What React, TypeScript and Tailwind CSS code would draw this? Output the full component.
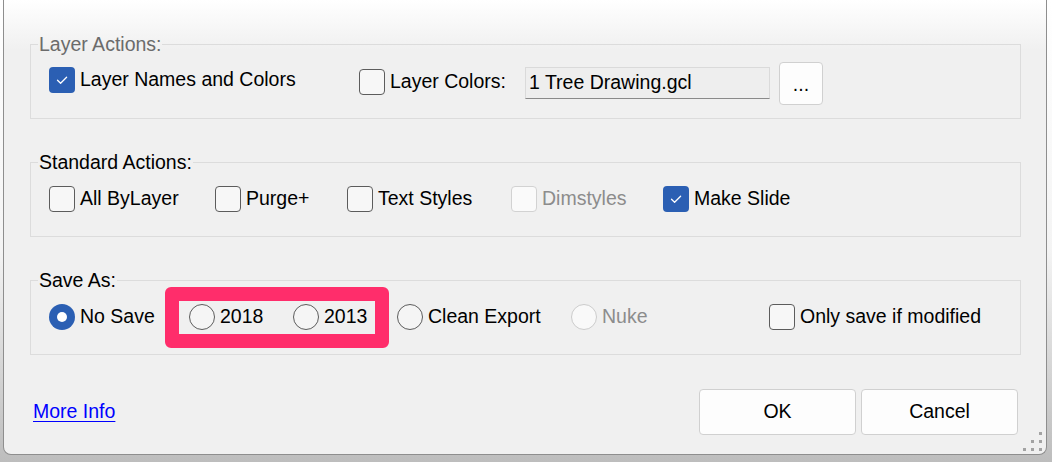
import React from 'react';

const font = { fontFamily: '"Liberation Sans", Arial, sans-serif' };

function CheckBox({ checked, disabled }: { checked?: boolean; disabled?: boolean }) {
  if (checked) {
    return (
      <span className="flex h-[26px] w-[26px] shrink-0 items-center justify-center rounded-[4px] bg-[#2b5fb3]">
        <svg width="26" height="26" viewBox="0 0 26 26" fill="none">
          <path d="M8.5 13.2 L11.6 16.3 L17.6 10.3" stroke="#ffffff" strokeWidth="1.3" strokeLinecap="round" strokeLinejoin="round" />
        </svg>
      </span>
    );
  }
  return (
    <span
      className={
        disabled
          ? 'h-[26px] w-[26px] shrink-0 rounded-[4px] border border-[#d2d2d2] bg-[#fafafa]'
          : 'h-[26px] w-[26px] shrink-0 rounded-[4px] border border-[#5c5c5c] bg-[#f7f7f7]'
      }
    />
  );
}

function Radio({ checked, disabled }: { checked?: boolean; disabled?: boolean }) {
  if (checked) {
    return (
      <span className="flex h-[26px] w-[26px] shrink-0 items-center justify-center rounded-full bg-[#2b5fb3]">
        <span className="h-[10px] w-[10px] rounded-full bg-white" />
      </span>
    );
  }
  return (
    <span
      className={
        disabled
          ? 'h-[26px] w-[26px] shrink-0 rounded-full border border-[#cccccc] bg-[#f9f9f9]'
          : 'h-[26px] w-[26px] shrink-0 rounded-full border border-[#5c5c5c] bg-[#f5f5f5]'
      }
    />
  );
}

function Option({
  label,
  width,
  kind = 'check',
  checked,
  disabled,
}: {
  label: string;
  width?: string;
  kind?: 'check' | 'radio';
  checked?: boolean;
  disabled?: boolean;
}) {
  return (
    <div className={`flex shrink-0 items-center gap-[5px] ${width ?? ''}`}>
      {kind === 'check' ? <CheckBox checked={checked} disabled={disabled} /> : <Radio checked={checked} disabled={disabled} />}
      <span className={disabled ? 'text-[#8c8c8c]' : 'text-black'}>{label}</span>
    </div>
  );
}

function Group({
  title,
  muted,
  rowClass,
  children,
}: {
  title: string;
  muted?: boolean;
  rowClass?: string;
  children: React.ReactNode;
}) {
  return (
    <fieldset className="w-[991px] border border-[#dcdcdc] pb-[13px]">
      <legend className={`ml-[7px] px-[1px] leading-[22px] ${muted ? 'text-[#6b6b6b]' : 'text-black'}`}>{title}</legend>
      <div className={`flex h-[50px] items-center pl-[18px] ${rowClass ?? ''}`}>{children}</div>
    </fieldset>
  );
}

export default function App() {
  return (
    <div
      className="h-[462px] w-[1052px] overflow-hidden bg-[linear-gradient(to_bottom,#ffffff,#f4f4f4_250px,#bdbdbd)] text-[19.5px]"
      style={font}
    >
      <div className="relative ml-[3px] flex h-[455px] w-[1044px] flex-col rounded-b-[8px] border-x border-b border-[#8e8e8e] bg-[linear-gradient(to_bottom,#ffffff_0px,#f0f0f0_50px)] pl-[26px] pr-[28px] pt-[33px]">
        {/* Layer Actions */}
        <Group title="Layer Actions:" muted>
          <Option label="Layer Names and Colors" checked width="w-[310px]" />
          <Option label="Layer Colors:" width="w-[166px] mt-[3px]" />
          <div className="mt-[6px] flex h-[32px] w-[245px] items-center border border-[#dadada] border-b-[#8a8a8a] bg-[#eeeeee] pl-[3px]">
            1 Tree Drawing.gcl
          </div>
          <button className="ml-[9px] mt-[7px] flex h-[43px] w-[44px] items-end justify-center rounded-[4px] border border-[#d0d0d0] bg-[#fdfdfd] pb-[10px] leading-none">
            ...
          </button>
        </Group>

        {/* Standard Actions */}
        <div className="mt-[32px]">
          <Group title="Standard Actions:" rowClass="pt-[2px]">
            <Option label="All ByLayer" width="w-[166px]" />
            <Option label="Purge+" width="w-[132px]" />
            <Option label="Text Styles" width="w-[164px]" />
            <Option label="Dimstyles" disabled width="w-[152px]" />
            <Option label="Make Slide" checked />
          </Group>
        </div>

        {/* Save As */}
        <div className="mt-[32px]">
          <Group title="Save As:" rowClass="pt-[2px]">
            <Option label="No Save" kind="radio" checked width="w-[116px]" />
            <div className="flex h-[61px] w-[224px] shrink-0 items-center rounded-[6px] border-[14px] border-[#ff2d6b] px-[10px]">
              <Option label="2018" kind="radio" width="w-[104px]" />
              <Option label="2013" kind="radio" />
            </div>
            <Option label="Clean Export" kind="radio" width="w-[174px] ml-[8px]" />
            <Option label="Nuke" kind="radio" disabled width="w-[198px]" />
            <Option label="Only save if modified" />
          </Group>
        </div>

        {/* Footer */}
        <div className="mt-[34px] flex h-[46px] items-center">
          <a href="#" className="ml-[3px] text-[#0000ff] underline underline-offset-[3px]">
            More Info
          </a>
          <div className="ml-auto flex gap-[5px]">
            <button className="h-[46px] w-[157px] rounded-[4px] border border-[#d0d0d0] bg-[#fdfdfd] text-black">OK</button>
            <button className="h-[46px] w-[157px] rounded-[4px] border border-[#d0d0d0] bg-[#fdfdfd] text-black">Cancel</button>
          </div>
        </div>

        {/* resize grip */}
        <div className="absolute bottom-[3px] right-[4px] grid grid-cols-3 gap-[5px]">
          <span className="h-[3px] w-[3px]" />
          <span className="h-[3px] w-[3px]" />
          <span className="h-[3px] w-[3px] bg-[#a3a3a3]" />
          <span className="h-[3px] w-[3px]" />
          <span className="h-[3px] w-[3px] bg-[#a3a3a3]" />
          <span className="h-[3px] w-[3px] bg-[#a3a3a3]" />
          <span className="h-[3px] w-[3px] bg-[#a3a3a3]" />
          <span className="h-[3px] w-[3px] bg-[#a3a3a3]" />
          <span className="h-[3px] w-[3px] bg-[#a3a3a3]" />
        </div>
      </div>
    </div>
  );
}
